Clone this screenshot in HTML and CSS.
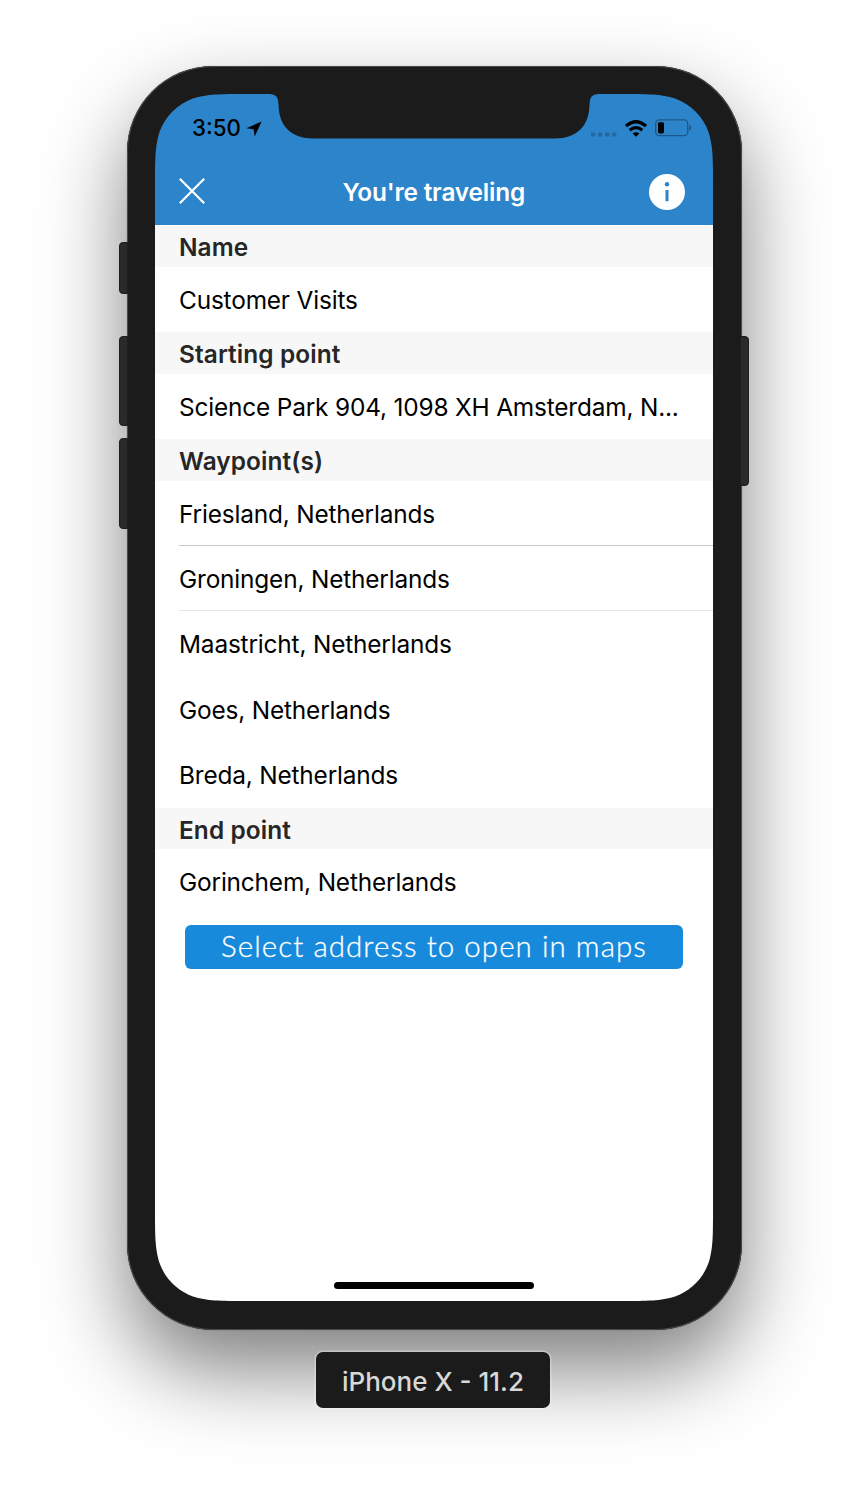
FILE: index.html
```html
<!DOCTYPE html>
<html lang="en">
<head>
<meta charset="utf-8">
<title>You're traveling</title>
<link rel="stylesheet" href="styles.css">
</head>
<body>
<main class="stage">
  <div class="phone">
    <i class="key key-mute"></i><i class="key key-up"></i><i class="key key-down"></i><i class="key key-power"></i>
    <div class="screen">
      <header class="top">
        <div class="status">
          <span class="time">3:50</span>
          <svg class="arrow" width="16" height="16" viewBox="0 0 16 16"><path d="M15.600.4 8.700 15.400 7.600 8.300.4 7.200z"/></svg>
          <span class="indicators">
            <svg width="26" height="5" viewBox="0 0 26 5" fill="#2269a4"><rect x="0" y=".5" width="4.300" height="4" rx="1"/><rect x="7" y=".5" width="4.300" height="4" rx="1"/><rect x="14" y=".5" width="4.300" height="4" rx="1"/><rect x="21" y=".5" width="4.300" height="4" rx="1"/></svg>
            <svg class="wifi" width="22" height="17" viewBox="0 0 22 17"><path d="M1 6.100Q11-2.600 21 6.100" fill="none" stroke="#000" stroke-width="3.300"/><path d="M4.700 10.300Q11 5 17.300 10.300" fill="none" stroke="#000" stroke-width="3.200"/><path d="M11 16.800 7.500 13.500Q11 10.800 14.500 13.500z"/></svg>
            <svg class="battery" width="37" height="18" viewBox="0 0 37 18"><rect x=".7" y=".9" width="32" height="15.800" rx="3.600" fill="none" stroke="#1d5889" stroke-width="1.300"/><rect x="3" y="3.200" width="6" height="11.200" rx="1.400"/><path d="M34.200 5.800Q36.400 6.600 36.400 8.800T34.200 11.800z" fill="#1d5889"/></svg>
          </span>
        </div>
        <div class="nav">
          <svg class="close" width="26" height="26" viewBox="0 0 26 26"><path d="M.8.8 25.200 25.200M25.200.8.8 25.200" stroke="#fff" stroke-width="2.200"/></svg>
          <h1>You're traveling</h1>
          <svg width="36" height="36" viewBox="0 0 36 36"><circle cx="18" cy="18" r="18" fill="#fff"/><circle cx="18" cy="10.300" r="2.200" fill="#2c84cb"/><rect x="16.500" y="16" width="3" height="11.200" fill="#2c84cb"/></svg>
        </div>
      </header>
      <section>
        <h2>Name</h2>
        <p class="row">Customer Visits</p>
        <h2>Starting point</h2>
        <p class="row">Science Park 904, 1098 XH Amsterdam, N...</p>
        <h2>Waypoint(s)</h2>
        <p class="row line">Friesland, Netherlands</p>
        <p class="row line faint">Groningen, Netherlands</p>
        <p class="row">Maastricht, Netherlands</p>
        <p class="row">Goes, Netherlands</p>
        <p class="row">Breda, Netherlands</p>
        <h2>End point</h2>
        <p class="row">Gorinchem, Netherlands</p>
      </section>
      <button class="open">Select address to open in maps</button>
      <svg class="notch" width="328" height="45" viewBox="0 0 328 45"><path d="M0 0Q8.500.3 8.500 9.500C8.500 33 22 44.500 43 44.500H285C306 44.500 319.500 33 319.500 9.500Q319.500.3 328 0z" fill="#1b1b1b"/></svg>
      <i class="home"></i>
    </div>
  </div>
  <div class="caption">iPhone X - 11.2</div>
</main>
</body>
</html>
```
FILE: styles.css
```css
* { box-sizing: border-box; }
body { margin: 0; background: #fff; font-family: Inter, "Liberation Sans", sans-serif; color: #000; }
.stage { height: 1492px; overflow: hidden; padding-top: 66px; display: flex; flex-direction: column; align-items: center; }
.phone {
  position: relative; width: 615px; height: 1264px; padding: 28px 28.500px 28.500px;
  border-radius: 86px; background: #1b1b1b;
  box-shadow: inset 0 0 0 1px #4a4a4a, 0 0 1px rgba(0,0,0,.5), 0 40px 84px rgba(0,0,0,.5);
}
.key { position: absolute; width: 9px; background: #2a2a2a; border: 1px solid #1d1d1d; }
.key-mute, .key-up, .key-down { left: -8px; border-radius: 4px 0 0 4px; }
.key-mute { top: 176px; height: 52px; }
.key-up { top: 270px; height: 90px; }
.key-down { top: 372px; height: 91px; }
.key-power { right: -7px; top: 270px; height: 150px; border-radius: 0 4px 4px 0; }
.screen {
  position: relative; width: 558px; height: 1207px; background: linear-gradient(#2c84cb 131px, #fff 131px);
  clip-path: path("M91.700 0H466.300C492.700 0 505.900 0 520.100 4.500C535.600 10.100 547.900 22.400 553.500 37.900C558 52.100 558 65.300 558 91.700V1115.300C558 1141.700 558 1154.900 553.500 1169.100C547.900 1184.600 535.600 1196.900 520.100 1202.500C505.900 1207 492.700 1207 466.300 1207H91.700C65.300 1207 52.100 1207 37.900 1202.500C22.400 1196.900 10.100 1184.600 4.500 1169.100C0 1154.900 0 1141.700 0 1115.300V91.700C0 65.300 0 52.100 4.500 37.900C10.100 22.400 22.400 10.100 37.900 4.500C52.100 0 65.300 0 91.700 0Z");
}
.top { height: 131px; }
.status { height: 66px; padding: 0 22px 0 37px; display: flex; align-items: center; }
.time { font-size: 22.300px; font-weight: 550; padding-top: 1px; width: 49px; white-space: nowrap; }
.arrow { margin: 4px 0 0 5px; }
.indicators { margin-left: auto; display: flex; align-items: center; padding-top: 2px; }
.indicators > svg:first-child { margin-top: 12px; }
.wifi { margin-left: 8px; }
.battery { margin: 0 -1px 0 8px; }
.nav { height: 63px; padding: 0 28px 0 24px; display: flex; align-items: center; justify-content: space-between; color: #fff; }
.close { margin: -1px 0 0 -.5px; }
h1 { margin: 1px 0 0 14px; font-size: 24.400px; font-weight: 600; letter-spacing: -.18px; }
h2 { margin: 0; height: 41.600px; line-height: 44px; padding-left: 24px; background: #f7f7f7; color: #262626; font-size: 24.400px; font-weight: 600; letter-spacing: .1px; }
.top + section > h2:first-child { background: linear-gradient(transparent 1px, #f7f7f7 1px); }
.row { margin: 0; height: 65.400px; line-height: 67px; padding-left: 24px; font-size: 24.400px; letter-spacing: -.17px; white-space: nowrap; }
.line { background: linear-gradient(#c8c8cb, #c8c8cb) 24px 100% / 100% 1px no-repeat; }
.line.faint { background-image: linear-gradient(#e4e4e6, #e4e4e6); }
.open {
  display: block; width: 498px; height: 44px; margin: 10px 0 0 30px; padding: 0 0 2px;
  border: 0; border-radius: 6px; background: #188adc; color: #fff;
  font: 300 29.500px/42px Lato, sans-serif; letter-spacing: 1.050px; -webkit-text-stroke: .3px #fff;
}
.notch { position: absolute; left: 115px; top: 0; }
.home { position: absolute; left: 179.200px; top: 1187.500px; width: 200px; height: 7.500px; border-radius: 4px; background: #000; }
.caption {
  position: relative; left: -1px; margin-top: 22px; width: 234px; height: 56px; border-radius: 7px; background: #1b1b1b; color: #d8d8d8;
  box-shadow: 0 0 0 1.500px rgba(255,255,255,.3); font-size: 26px; line-height: 60px; text-align: center; font-weight: 500;
}
```
